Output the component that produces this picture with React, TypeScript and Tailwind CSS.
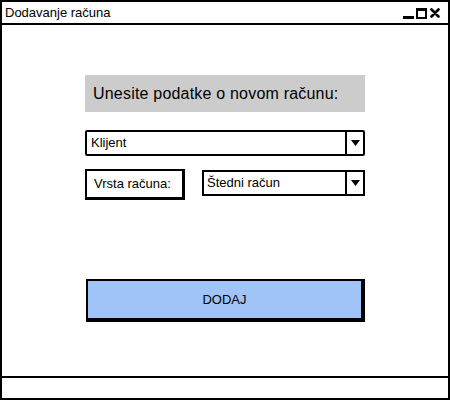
import React from "react";

function Caret() {
  return (
    <div className="w-[18px] flex items-center justify-center border-l-2 border-black self-stretch">
      <svg width="9" height="6" viewBox="0 0 9 6">
        <polygon points="0,0 9,0 4.5,6" fill="#000" />
      </svg>
    </div>
  );
}

export default function App() {
  return (
    <div
      className="w-[450px] h-[400px] bg-white flex flex-col border-2 border-black text-black"
      style={{ fontFamily: '"Liberation Sans", Arial, sans-serif' }}
    >
      <div className="h-[23px] flex items-center justify-between border-b-2 border-black pl-[3px] pr-[8px]">
        <span className="text-[13px] leading-none">Dodavanje računa</span>
        <div className="flex items-end gap-[2px] h-[12px]">
          <div className="w-[11px] h-[3px] bg-black" />
          <div className="w-[11px] h-[11px] border-2 border-black border-t-[3px]" />
          <svg width="10" height="10" viewBox="0 0 10 10" className="ml-[1px] mb-[1px]">
            <path d="M1.5 1.5 L8.5 8.5 M8.5 1.5 L1.5 8.5" stroke="#000" strokeWidth="2.6" strokeLinecap="round" />
          </svg>
        </div>
      </div>
      <div className="flex-1 flex flex-col pl-[83px]">
        <div className="mt-[50px] w-[280px] h-[37px] bg-[#cccccc] flex items-center pl-[8px]">
          <span className="text-[16px] tracking-[0.2px]">Unesite podatke o novom računu:</span>
        </div>
        <div className="mt-[18px] w-[280px] h-[26px] border-2 border-black rounded-[2px] flex items-stretch">
          <div className="flex-1 flex items-center pl-[4px] text-[13px]">Klijent</div>
          <Caret />
        </div>
        <div className="mt-[13px] flex items-start">
          <div className="w-[100px] h-[31px] border-2 border-black border-r-[3px] border-b-[3px] flex items-center pl-[7px] text-[13px]">
            Vrsta računa:
          </div>
          <div className="ml-[17px] mt-[1px] w-[163px] h-[26px] border-2 border-black flex items-stretch">
            <div className="flex-1 flex items-center pl-[3px] text-[13px]">Štedni račun</div>
            <Caret />
          </div>
        </div>
        <div className="mt-[79px] ml-[1px] w-[279px] h-[43px] bg-[#a0c4f8] border-2 border-black border-r-[4px] border-b-[4px] flex items-center justify-center text-[13px]">
          DODAJ
        </div>
      </div>
      <div className="h-[22px] border-t-2 border-black" />
    </div>
  );
}
